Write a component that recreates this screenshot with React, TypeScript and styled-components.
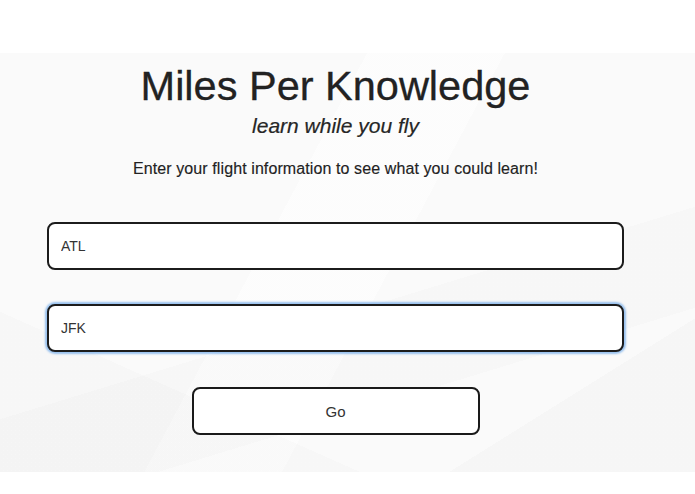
import React, { useEffect, useRef, useState } from 'react';
import styled, { createGlobalStyle } from 'styled-components';

const GlobalStyle = createGlobalStyle`
    html, body {
        margin: 0;
        padding: 0;
        background: #ffffff;
        font-family: 'Liberation Sans', Arial, Helvetica, sans-serif;
    }
    * {
        box-sizing: border-box;
    }
`;

const Page = styled.div`
    width: 100%;
    min-height: 494px;
    padding-top: 53px;
    background: #ffffff;
`;

// faint low-poly backdrop of the hero band
const Hero = styled.section`
    height: 419px;
    padding: 9px 71px 0 47px;
    background:
        linear-gradient(163deg, transparent 58%, rgba(0, 0, 0, 0.01) 58%, rgba(0, 0, 0, 0.01) 74%, transparent 74%),
        linear-gradient(24deg, rgba(0, 0, 0, 0.012) 22%, transparent 22%),
        linear-gradient(-32deg, rgba(0, 0, 0, 0.014) 18%, transparent 18%),
        linear-gradient(118deg, transparent 40%, rgba(255, 255, 255, 0.5) 40%, rgba(255, 255, 255, 0.5) 55%, transparent 55%),
        #fafafa;
`;

const Column = styled.div`
    width: 577px;
    display: flex;
    flex-direction: column;
    align-items: center;
`;

const Title = styled.h1`
    margin: 0;
    font-size: 41.5px;
    line-height: 48px;
    font-weight: 400;
    color: #222;
    -webkit-text-stroke: 0.3px #222;
`;

const Tagline = styled.h2`
    margin: 4px 0 0;
    font-size: 21px;
    line-height: 24px;
    font-style: italic;
    font-weight: 400;
    color: #262626;
    -webkit-text-stroke: 0.2px #262626;
`;

const Prompt = styled.p`
    margin: 21px 0 0;
    font-size: 16px;
    line-height: 20px;
    letter-spacing: 0.1px;
    color: #222;
    -webkit-text-stroke: 0.15px #222;
`;

const Form = styled.form`
    width: 100%;
    margin-top: 43px;
    display: flex;
    flex-direction: column;
    align-items: center;
`;

const Field = styled.input<{ focused?: boolean }>`
    width: 100%;
    height: 48px;
    padding: 0 12px;
    border: 2px solid #1c1c1c;
    border-radius: 8px;
    background: #fff;
    font-family: 'Liberation Sans', Arial, sans-serif;
    font-size: 14px;
    color: #333;
    outline: none;
    caret-color: #222;
    box-shadow: ${(props) => (props.focused ? '0 0 2px 2px rgba(120, 175, 235, 0.75)' : 'none')};
    & + & {
        margin-top: 34px;
    }
`;

const GoButton = styled.button`
    width: 288px;
    height: 48px;
    margin-top: 35px;
    border: 2px solid #1a1a1a;
    border-radius: 8px;
    background: #fff;
    font-family: 'Liberation Sans', Arial, sans-serif;
    font-size: 15px;
    color: #333;
    cursor: pointer;
`;

export default function App() {
    const [from, setFrom] = useState('ATL');
    const [to, setTo] = useState('JFK');
    const toRef = useRef<HTMLInputElement>(null);

    useEffect(() => {
        const el = toRef.current;
        if (el) {
            el.focus();
            el.setSelectionRange(el.value.length, el.value.length);
        }
    }, []);

    return (
        <>
            <GlobalStyle />
            <Page>
                <Hero>
                    <Column>
                        <Title>Miles Per Knowledge</Title>
                        <Tagline>learn while you fly</Tagline>
                        <Prompt>Enter your flight information to see what you could learn!</Prompt>
                        <Form onSubmit={(e) => e.preventDefault()}>
                            <Field value={from} onChange={(e) => setFrom(e.target.value)} />
                            <Field ref={toRef} focused value={to} onChange={(e) => setTo(e.target.value)} />
                            <GoButton type="submit">Go</GoButton>
                        </Form>
                    </Column>
                </Hero>
            </Page>
        </>
    );
}
